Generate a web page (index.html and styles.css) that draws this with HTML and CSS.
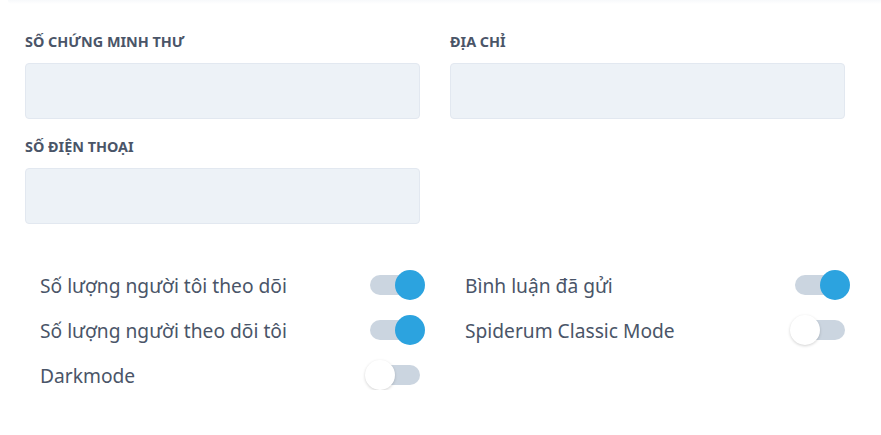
FILE: index.html
```html
<!DOCTYPE html>
<html lang="vi">
<head>
<meta charset="utf-8">
<title>Cài đặt</title>
<link rel="stylesheet" href="styles.css">
</head>
<body>
<div class="top-edge"></div>
<main class="settings">
  <div class="fields">
    <div class="field">
      <label class="field-label">Số chứng minh thư</label>
      <input class="field-input" type="text">
    </div>
    <div class="field">
      <label class="field-label">Địa chỉ</label>
      <input class="field-input" type="text">
    </div>
    <div class="field">
      <label class="field-label">Số điện thoại</label>
      <input class="field-input" type="text">
    </div>
  </div>
  <div class="toggles">
    <div class="toggle-col">
      <div class="toggle-row"><span class="toggle-text">Số lượng người tôi theo dõi</span><span class="switch on"><span class="knob"></span></span></div>
      <div class="toggle-row"><span class="toggle-text">Số lượng người theo dõi tôi</span><span class="switch on"><span class="knob"></span></span></div>
      <div class="toggle-row"><span class="toggle-text">Darkmode</span><span class="switch"><span class="knob"></span></span></div>
    </div>
    <div class="toggle-col">
      <div class="toggle-row"><span class="toggle-text">Bình luận đã gửi</span><span class="switch on"><span class="knob"></span></span></div>
      <div class="toggle-row"><span class="toggle-text">Spiderum Classic Mode</span><span class="switch"><span class="knob"></span></span></div>
    </div>
  </div>
</main>
</body>
</html>
```

FILE: styles.css
```css
* { box-sizing: border-box; }
html, body {
  margin: 0;
  padding: 0;
  background: #ffffff;
  font-family: "Noto Sans", "Open Sans", sans-serif;
  color: #4a5568;
}
.top-edge {
  height: 4px;
  margin: 0 0 0 8px;
  border-radius: 0 0 0 8px;
  background: linear-gradient(#f7f9fb, #ffffff);
}
.settings {
  width: 820px;
  margin-left: 25px;
  padding-top: 28px;
}
.fields {
  display: grid;
  grid-template-columns: 395px 395px;
  column-gap: 30px;
  row-gap: 18px;
}
.field {
  display: flex;
  flex-direction: column;
}
.field-label {
  font-size: 14.4px;
  line-height: 20px;
  font-weight: 700;
  text-transform: uppercase;
  color: #4a5568;
  margin-bottom: 11px;
}
.field-input {
  height: 56px;
  width: 100%;
  background: #edf2f7;
  border: 1px solid #e2e8f0;
  border-radius: 4px;
  font: inherit;
  padding: 0 12px;
  outline: none;
}
.toggles {
  display: grid;
  grid-template-columns: 395px 395px;
  column-gap: 30px;
  margin-top: 46px;
}
.toggle-col {
  display: flex;
  flex-direction: column;
  gap: 15px;
  padding-left: 15px;
}
.toggle-row {
  height: 30px;
  display: flex;
  align-items: center;
  justify-content: space-between;
}
.toggle-text {
  font-size: 19.2px;
  line-height: 27px;
  color: #4a5568;
}
.switch {
  position: relative;
  width: 50px;
  height: 20px;
  border-radius: 10px;
  background: #cbd5e0;
  flex-shrink: 0;
}
.knob {
  position: absolute;
  top: -5px;
  left: -5px;
  width: 30px;
  height: 30px;
  border-radius: 50%;
  background: #ffffff;
  box-shadow: 0 1px 3px rgba(0, 0, 0, 0.18);
}
.switch.on .knob {
  left: 25px;
  background: #2ca3df;
  box-shadow: none;
}
```
